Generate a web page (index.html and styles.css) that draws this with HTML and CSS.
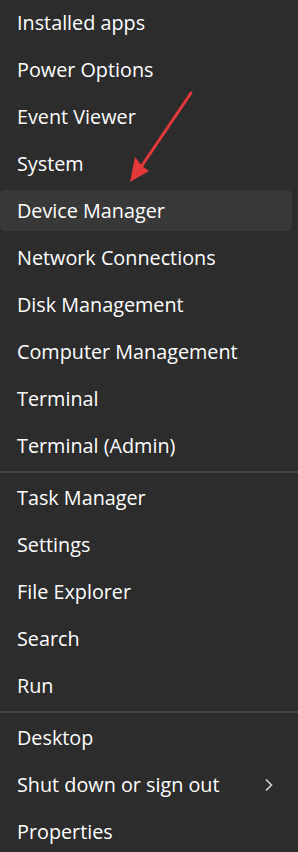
FILE: index.html
```html
<!DOCTYPE html>
<html lang="en">
<head>
<meta charset="utf-8">
<link rel="stylesheet" href="styles.css">
</head>
<body>
<div class="menu">
  <div class="item">Installed apps</div>
  <div class="item">Power Options</div>
  <div class="item">Event Viewer</div>
  <div class="item">System</div>
  <div class="item active">Device Manager</div>
  <div class="item">Network Connections</div>
  <div class="item">Disk Management</div>
  <div class="item">Computer Management</div>
  <div class="item">Terminal</div>
  <div class="item">Terminal (Admin)</div>
  <div class="sep"></div>
  <div class="item">Task Manager</div>
  <div class="item">Settings</div>
  <div class="item">File Explorer</div>
  <div class="item">Search</div>
  <div class="item">Run</div>
  <div class="sep"></div>
  <div class="item">Desktop</div>
  <div class="item has-sub">Shut down or sign out
    <svg class="chev" width="10" height="14" viewBox="0 0 10 14"><path d="M2 1.5 L7.5 7 L2 12.5" fill="none" stroke="#d6d6d6" stroke-width="1.6"/></svg>
  </div>
  <div class="item">Properties</div>
</div>
<svg class="annot" width="298" height="852" viewBox="0 0 298 852">
  <line x1="191" y1="93" x2="139" y2="170" stroke="#e5383b" stroke-width="3" stroke-linecap="round"/>
  <polygon points="130,182 135,157 142,166 149,171" fill="#e5383b"/>
</svg>
</body>
</html>
```
FILE: styles.css
```css
html, body {
  margin: 0;
  padding: 0;
  background: #2c2c2c;
  height: 852px;
  overflow: hidden;
}
body {
  position: relative;
  font-family: "Open Sans", "Noto Sans", sans-serif;
  color: #ffffff;
}
.menu {
  display: flex;
  flex-direction: column;
  margin-top: -1px;
}
.item {
  height: 41px;
  margin: 3px 6px 3px 0;
  padding-left: 17px;
  padding-right: 17px;
  display: flex;
  align-items: center;
  font-size: 19.8px;
  border-radius: 5px;
  white-space: nowrap;
}
.item.active {
  background: #383838;
}
.item.has-sub {
  justify-content: space-between;
  padding-right: 18px;
}
.chev {
  display: block;
}
.sep {
  height: 2px;
  margin: 2px 0 1px;
  background: #414141;
}
.annot {
  position: absolute;
  left: 0;
  top: 0;
  pointer-events: none;
}
```
